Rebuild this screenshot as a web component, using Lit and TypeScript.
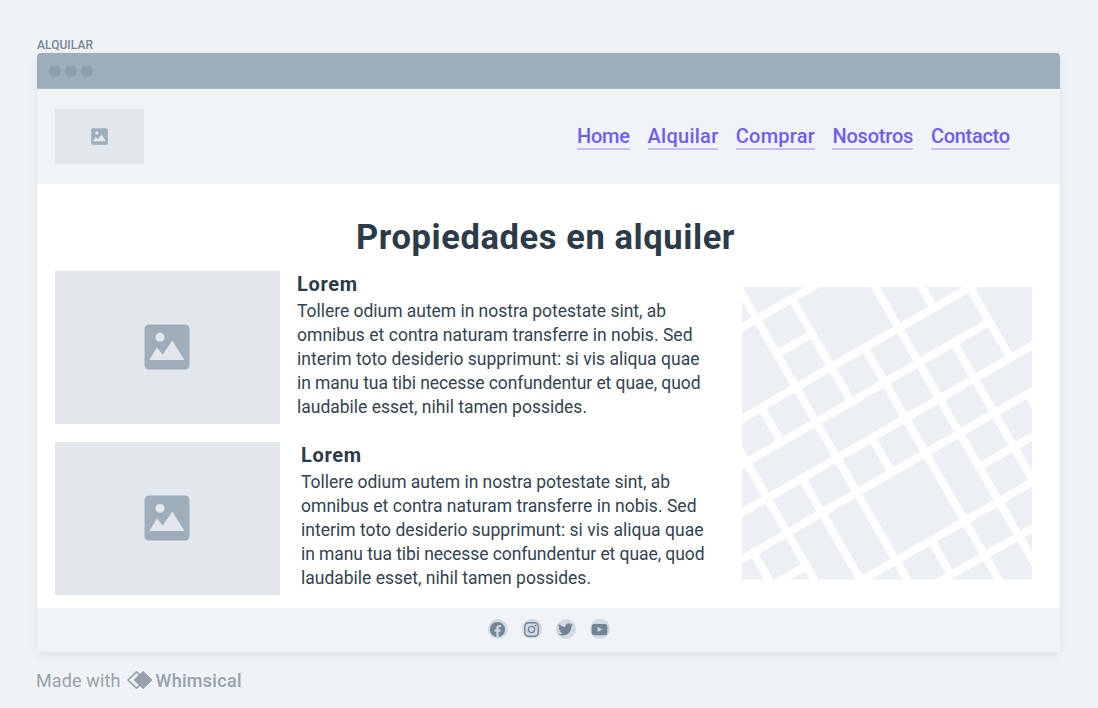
import { LitElement, html, css, svg } from "lit";
import { customElement, property } from "lit/decorators.js";

/** A single line of text, tracked so that it fills the given width. */
@customElement("fit-text")
class FitText extends LitElement {
  @property({ type: Number }) width = 100;
  @property() text = "";
  static styles = css`
    :host { display: block; }
    .line { display: inline-block; white-space: pre; }
  `;
  render() {
    return html`<span class="line">${this.text}</span>`;
  }
  updated() {
    const line = this.renderRoot.querySelector(".line") as HTMLElement;
    line.style.letterSpacing = "0px";
    const natural = line.getBoundingClientRect().width;
    const spacing = (this.width - natural) / Math.max(1, this.text.length - 1);
    line.style.letterSpacing = `${spacing.toFixed(3)}px`;
    this.style.width = `${this.width}px`;
  }
}

@customElement("picture-box")
class PictureBox extends LitElement {
  static styles = css`
    :host { display: flex; align-items: center; justify-content: center; background: #e2e7eb; }
    svg { display: block; width: var(--icon, 46px); height: var(--icon, 46px); margin-right: var(--shift, 1px); }
  `;
  render() {
    return html`<svg viewBox="0 0 46 46">
      <rect x=".5" y=".5" width="45" height="45" rx="4.5" fill="#9eadba" />
      <circle cx="16" cy="13.2" r="4.5" fill="#e2e7eb" />
      <path d="M5.3 36 12.8 23.6 18.8 30.6 28.3 16.6 40.5 36Z" fill="#e2e7eb" />
    </svg>`;
  }
}

/* Streets in a grid turned by 30 degrees: [fixed coordinate, from, to]. */
const rising: number[][] = [
  [35, -60, 120], [75.5, -3.5, 37.5], [114, -90, 260], [154, -100, 197],
  [195.5, -140, 280], [235.5, -160, 280], [273.5, -123, -83], [274.5, 115.5, 240],
  [314, -43, 240], [354, -3, 200],
];
const falling: number[][] = [
  [-123, 235, 330], [-83.7, 100, 360], [-43.7, 114, 154], [-43.7, 195, 380],
  [-3.3, -20, 400], [37.3, 35, 154], [37, 195.5, 235.5], [37, 314, 354],
  [76, 114, 420], [115.3, 30, 420], [155.5, 60, 114], [155.5, 154, 330],
  [197, 114, 195.5], [194.5, 235.5, 260],
];

@customElement("street-map")
class StreetMap extends LitElement {
  static styles = css`
    :host { display: block; width: 290px; height: 293px; }
    svg { display: block; }
  `;
  render() {
    return html`<svg width="290" height="293" viewBox="0 0 290 293">
      <rect width="290" height="292.6" fill="#eceff4" />
      <g transform="rotate(-30)" stroke="#fff" stroke-width="7.8">
        ${rising.map(([v, a, b]) => svg`<line x1=${a} y1=${v} x2=${b} y2=${v} />`)}
        ${falling.map(([u, a, b]) => svg`<line x1=${u} y1=${a} x2=${u} y2=${b} />`)}
      </g>
    </svg>`;
  }
}

const links: [string, number][] = [
  ["Home", 53], ["Alquilar", 70.7], ["Comprar", 79], ["Nosotros", 81], ["Contacto", 79],
];
const lines: [string, number][] = [
  ["Tollere odium autem in nostra potestate sint, ab", 369],
  ["omnibus et contra naturam transferre in nobis. Sed", 395.5],
  ["interim toto desiderio supprimunt: si vis aliqua quae", 402.5],
  ["in manu tua tibi necesse confundentur et quae, quod", 403.5],
  ["laudabile esset, nihil tamen possides.", 290],
];
const social = [
  svg`<path fill="#748695" d="M24 12.07C24 5.4 18.63 0 12 0S0 5.4 0 12.07C0 18.1 4.39 23.1 10.13 24v-8.44H7.08v-3.49h3.05V9.41c0-3.02 1.79-4.69 4.53-4.69 1.31 0 2.68.24 2.68.24v2.97h-1.51c-1.49 0-1.96.93-1.96 1.89v2.25h3.33l-.53 3.49h-2.8V24C19.61 23.1 24 18.1 24 12.07"/>`,
  svg`<g fill="none" stroke="#748695" stroke-width="2.2"><rect x="1.2" y="1.2" width="21.6" height="21.6" rx="6"/><circle cx="12" cy="12" r="5"/></g><circle cx="18.3" cy="5.7" r="1.5" fill="#748695"/>`,
  svg`<path fill="#748695" d="M24 4.56a9.8 9.8 0 0 1-2.83.77 4.93 4.93 0 0 0 2.17-2.72 9.9 9.9 0 0 1-3.13 1.19 4.92 4.92 0 0 0-8.38 4.48A13.98 13.98 0 0 1 1.67 3.15a4.93 4.93 0 0 0 1.52 6.57 4.9 4.9 0 0 1-2.23-.61v.06a4.93 4.93 0 0 0 3.95 4.83 4.9 4.9 0 0 1-2.22.08 4.93 4.93 0 0 0 4.6 3.42A9.87 9.87 0 0 1 0 19.54a13.94 13.94 0 0 0 7.55 2.21c9.05 0 14-7.5 14-13.98l-.02-.64A10 10 0 0 0 24 4.56z"/>`,
  svg`<rect x="-.5" y="3" width="25" height="18" rx="4" fill="#748695"/><path fill="#d0dae2" d="M9 8v8l7.5-4z"/>`,
];

@customElement("app-root")
class AppRoot extends LitElement {
  static styles = css`
    :host {
      display: block; box-sizing: border-box; width: 1098px; height: 708px;
      padding: 37px 38px 0 37px; background: #eff3f6; overflow: hidden;
      font-family: Roboto, "Liberation Sans", sans-serif; color: #2b3b49;
    }
    .label { height: 16px; line-height: 16px; font-size: 12px; font-weight: 500; color: #778896; }
    .window { height: 599px; border-radius: 4px 4px 2px 2px; overflow: hidden; background: #fff; }
    .shadow { border-radius: 4px 4px 2px 2px; box-shadow: 0 2px 8px rgba(43, 59, 73, .09); }
    .bar {
      box-sizing: border-box; height: 36px; display: flex; align-items: center; gap: 4px;
      padding-left: 12px; background: #9eadba; border-bottom: 1px solid #a9b7c5;
    }
    .dot { width: 12px; height: 12px; border-radius: 50%; background: #8d9dac; }
    .header {
      box-sizing: border-box; height: 95px; background: #f0f4f7; display: flex;
      justify-content: space-between; align-items: flex-start; padding: 20px 50px 0 18px;
    }
    .logo { width: 89px; height: 55px; --icon: 17px; --shift: 0px; }
    .nav { display: flex; gap: 17.6px; padding-top: 15px; }
    .link {
      color: #6c5df5; font-size: 20px; font-weight: 500; line-height: 24px;
      border-bottom: 2px solid #c5bef7; text-decoration: none;
    }
    .main { height: 423.5px; box-sizing: border-box; padding: 30px 28px 0 18px; }
    h1 { margin: 0 0 0 301px; height: 57px; font-size: 34.5px; line-height: 46px; font-weight: 700; }
    .content { display: flex; justify-content: space-between; }
    .list { display: flex; flex-direction: column; gap: 18px; }
    .item { display: flex; gap: 17px; height: 153px; }
    .item + .item { gap: 21px; }
    .photo { width: 225px; height: 152.6px; }
    h2 { margin: 1px 0 4px; font-size: 20px; line-height: 24px; font-weight: 700; }
    p { margin: 0; font-size: 17.5px; line-height: 23.9px; color: #334351; }
    .map { margin-top: 16px; }
    .footer {
      height: 44.5px; box-sizing: border-box; background: #f0f4f7; display: flex;
      justify-content: center; gap: 14px; padding-top: 11.5px;
    }
    .round {
      width: 20px; height: 20px; border-radius: 50%; background: #d0dae2;
      display: flex; align-items: center; justify-content: center;
    }
    .round svg { width: 15px; height: 15px; overflow: visible; }
    .credit {
      display: flex; align-items: center; height: 24px; margin: 16px 0 0 -1px;
      color: #95a2ad; font-size: 18px;
    }
    .credit svg { margin: 0 3px 0 5px; }
    .brand { font-weight: 500; }
  `;
  render() {
    return html`
      <fit-text class="label" .width=${56} .text=${"ALQUILAR"}></fit-text>
      <div class="shadow"><div class="window">
        <div class="bar"><i class="dot"></i><i class="dot"></i><i class="dot"></i></div>
        <div class="header">
          <picture-box class="logo"></picture-box>
          <nav class="nav">
            ${links.map(([t, w]) => html`<a class="link"><fit-text .width=${w} .text=${t}></fit-text></a>`)}
          </nav>
        </div>
        <div class="main">
          <h1><fit-text .width=${378.5} .text=${"Propiedades en alquiler"}></fit-text></h1>
          <div class="content">
            <div class="list">
              ${[0, 1].map(() => html`<article class="item">
                <picture-box class="photo"></picture-box>
                <div>
                  <h2><fit-text .width=${60} .text=${"Lorem"}></fit-text></h2>
                  <p>${lines.map(([t, w]) => html`<fit-text .width=${w} .text=${t}></fit-text>`)}</p>
                </div>
              </article>`)}
            </div>
            <street-map class="map"></street-map>
          </div>
        </div>
        <div class="footer">
          ${social.map((s) => html`<span class="round"><svg viewBox="0 0 24 24">${s}</svg></span>`)}
        </div>
      </div></div>
      <div class="credit">
        <fit-text .width=${84.5} .text=${"Made with"}></fit-text>
        <svg width="27" height="20" viewBox="0 0 27 20">
          <path d="M10.5 1.8 2 10l8.500 8.200L19 10Z" fill="none" stroke="#95a2ad" stroke-width="1.6" stroke-linejoin="round" />
          <path d="M17 1.400 8 10l9 8.600L26 10Z" fill="#95a2ad" stroke="#95a2ad" stroke-width="1" stroke-linejoin="round" />
        </svg>
        <fit-text class="brand" .width=${86} .text=${"Whimsical"}></fit-text>
      </div>
    `;
  }
}
